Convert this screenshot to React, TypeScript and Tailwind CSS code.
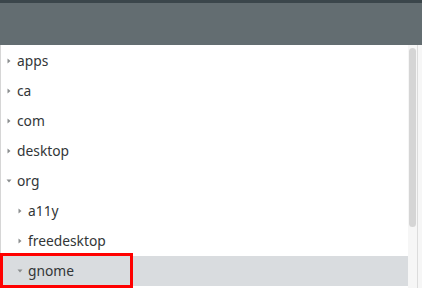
import React from 'react';

const rows = [
  { label: 'apps', depth: 0, open: false },
  { label: 'ca', depth: 0, open: false },
  { label: 'com', depth: 0, open: false },
  { label: 'desktop', depth: 0, open: false },
  { label: 'org', depth: 0, open: true },
  { label: 'a11y', depth: 1, open: false },
  { label: 'freedesktop', depth: 1, open: false },
  { label: 'gnome', depth: 1, open: true, selected: true },
];

const Expander = ({ open }: { open: boolean }) => (
  <svg width="6" height="6" viewBox="0 0 6 6" className="shrink-0">
    {open ? <path d="M0.5 1.5 L5.5 1.5 L3 4.5 Z" fill="#8b8e8f" /> : <path d="M1.5 0.5 L4.5 3 L1.5 5.5 Z" fill="#8b8e8f" />}
  </svg>
);

const App = () => {
  return (
    <div className="w-[422px] h-[288px] overflow-hidden bg-white relative" style={{ fontFamily: '"Noto Sans", "Open Sans", sans-serif' }}>
      {/* title strip + header */}
      <div className="h-[3px] bg-[#3b464b]"></div>
      <div className="h-[42px] bg-[#636d71]"></div>

      <div className="flex h-[243px]">
        {/* tree */}
        <div className="flex-1 border-l border-[#d6d6d6] pt-[1px]">
          {rows.map((r) => (
            <div
              key={r.label}
              className={`h-[30px] flex items-center gap-[5px] text-[13.8px] text-[#323637] ${r.selected ? 'bg-[#d9dcdf]' : ''} ${r.depth === 1 ? 'pl-[16px]' : 'pl-[5px]'}`}
            >
              <Expander open={r.open} />
              <span className="leading-none">{r.label}</span>
            </div>
          ))}
        </div>

        {/* scrollbar */}
        <div className="w-[14px] flex bg-[#f6f6f6]">
          <div className="w-[9px] pt-[3px] px-[1px]">
            <div className="h-[179px] w-[7px] rounded-full bg-[#d5d5d5]"></div>
          </div>
          <div className="w-[1px] bg-[#dcdcdc]"></div>
        </div>
      </div>

      {/* annotation box */}
      <div className="absolute left-0 top-[253px] w-[133px] h-[35px] border-[3px] border-[#ff0000]"></div>
    </div>
  );
};

export default App;
